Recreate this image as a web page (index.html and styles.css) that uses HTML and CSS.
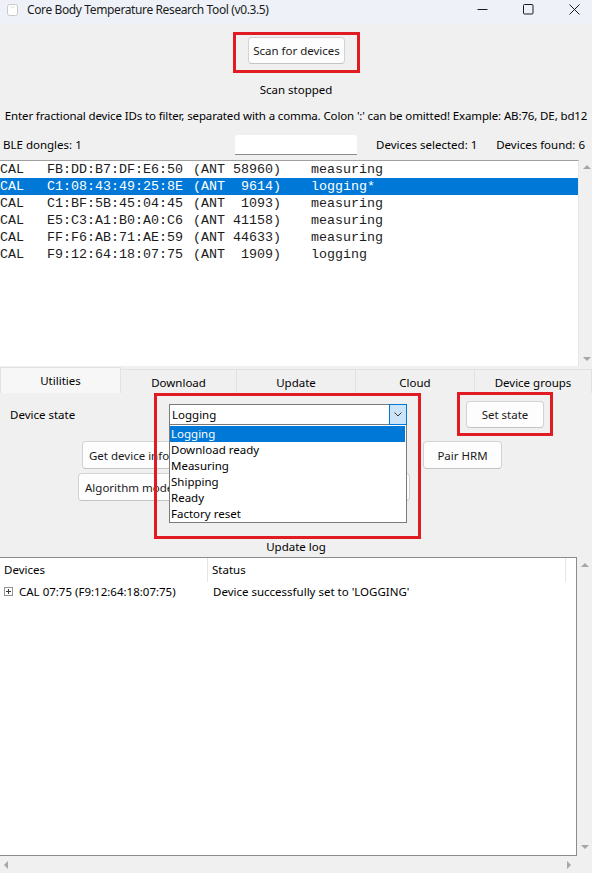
FILE: index.html
```html
<!DOCTYPE html>
<html lang="en">
<head>
<meta charset="utf-8">
<title>Core Body Temperature Research Tool (v0.3.5)</title>
<link rel="stylesheet" href="styles.css">
</head>
<body>
<div class="window">
  <header class="titlebar">
    <svg class="app-icon" width="11" height="12" viewBox="0 0 11 12">
      <rect x="0.5" y="0.5" width="10" height="11" rx="2" fill="#ffffff" stroke="#c8c8c8"/>
      <rect x="3" y="2.5" width="5" height="1" fill="#e4e4e4"/>
    </svg>
    <span class="title">Core Body Temperature Research Tool (v0.3.5)</span>
    <div class="win-controls">
      <span class="wc"><svg width="11" height="11" viewBox="0 0 11 11"><path d="M0.5 5.5h10" stroke="#1b1b1b" stroke-width="1"/></svg></span>
      <span class="wc"><svg width="11" height="11" viewBox="0 0 11 11"><rect x="0.5" y="0.5" width="9.5" height="9.5" rx="1" fill="none" stroke="#1b1b1b" stroke-width="1"/></svg></span>
      <span class="wc"><svg width="11" height="11" viewBox="0 0 11 11"><path d="M0.5 0.5l10 10M10.5 0.5l-10 10" stroke="#1b1b1b" stroke-width="1"/></svg></span>
    </div>
  </header>

  <main class="client">
    <div class="scan-row">
      <div class="mark mark-scan">
        <button class="btn btn-scan">Scan for devices</button>
      </div>
    </div>
    <div class="status-line">Scan stopped</div>
    <div class="hint-line">Enter fractional device IDs to filter, separated with a comma. Colon ':' can be omitted! Example: AB:76, DE, bd12</div>

    <div class="info-row">
      <span class="dongles">BLE dongles: 1</span>
      <input class="filter-input" type="text">
      <span class="selected-count">Devices selected: 1</span>
      <span class="found-count">Devices found: 6</span>
    </div>

    <div class="device-box">
      <ul class="device-list">
        <li class="dev-row"><span class="c-type">CAL</span><span class="c-mac">FB:DD:B7:DF:E6:50</span><span class="c-ant">(ANT 58960)</span><span class="c-state">measuring</span></li>
        <li class="dev-row is-selected"><span class="c-type">CAL</span><span class="c-mac">C1:08:43:49:25:8E</span><span class="c-ant">(ANT  9614)</span><span class="c-state">logging*</span></li>
        <li class="dev-row"><span class="c-type">CAL</span><span class="c-mac">C1:BF:5B:45:04:45</span><span class="c-ant">(ANT  1093)</span><span class="c-state">measuring</span></li>
        <li class="dev-row"><span class="c-type">CAL</span><span class="c-mac">E5:C3:A1:B0:A0:C6</span><span class="c-ant">(ANT 41158)</span><span class="c-state">measuring</span></li>
        <li class="dev-row"><span class="c-type">CAL</span><span class="c-mac">FF:F6:AB:71:AE:59</span><span class="c-ant">(ANT 44633)</span><span class="c-state">measuring</span></li>
        <li class="dev-row"><span class="c-type">CAL</span><span class="c-mac">F9:12:64:18:07:75</span><span class="c-ant">(ANT  1909)</span><span class="c-state">logging</span></li>
      </ul>
      <div class="vscroll list-vscroll">
        <span class="arrow arrow-up"></span>
        <span class="arrow arrow-down"></span>
      </div>
    </div>

    <nav class="tabs">
      <span class="tab tab-utilities is-active">Utilities</span>
      <span class="tab tab-download">Download</span>
      <span class="tab tab-update">Update</span>
      <span class="tab tab-cloud">Cloud</span>
      <span class="tab tab-groups">Device groups</span>
    </nav>

    <section class="tab-panel">
      <div class="panel-row row-state">
        <span class="field-label">Device state</span>
        <div class="combo mark mark-combo">
          <div class="combo-box">
            <span class="combo-value">Logging</span>
            <span class="combo-button">
              <svg width="8" height="5" viewBox="0 0 8 5"><path d="M0.5 0.5l3.5 3.5 3.5-3.5" fill="none" stroke="#3a3a3a" stroke-width="1"/></svg>
            </span>
          </div>
          <ul class="combo-popup">
            <li class="combo-item is-current">Logging</li>
            <li class="combo-item">Download ready</li>
            <li class="combo-item">Measuring</li>
            <li class="combo-item">Shipping</li>
            <li class="combo-item">Ready</li>
            <li class="combo-item">Factory reset</li>
          </ul>
        </div>
        <div class="mark mark-set">
          <button class="btn btn-set">Set state</button>
        </div>
      </div>
      <div class="panel-row row-info">
        <button class="btn btn-left btn-info">Get device info</button>
        <button class="btn btn-pair">Pair HRM</button>
      </div>
      <div class="panel-row row-algo">
        <button class="btn btn-left btn-algo">Algorithm mode</button>
      </div>
    </section>

    <div class="log-title">Update log</div>

    <div class="log-area">
      <div class="log-table">
        <div class="log-head">
          <span class="lh lh-devices">Devices</span>
          <span class="lh lh-status">Status</span>
        </div>
        <div class="log-row">
          <span class="lc lc-devices"><svg class="expander" width="9" height="9" viewBox="0 0 9 9"><rect x="0.5" y="0.5" width="8" height="8" fill="#ffffff" stroke="#919191"/><path d="M2 4.5h5M4.5 2v5" stroke="#3c3c3c"/></svg>CAL 07:75 (F9:12:64:18:07:75)</span>
          <span class="lc lc-status">Device successfully set to 'LOGGING'</span>
        </div>
      </div>
      <div class="vscroll log-vscroll">
        <span class="arrow arrow-up"></span>
        <span class="arrow arrow-down"></span>
      </div>
    </div>
    <div class="hscroll">
      <span class="arrow arrow-left"></span>
      <span class="arrow arrow-right"></span>
    </div>
  </main>
</div>
</body>
</html>
```

FILE: styles.css
```css
* { box-sizing: border-box; }

html, body {
  margin: 0;
  padding: 0;
}

body {
  background: #f0f0f0;
  font-family: "Noto Sans", "Open Sans", sans-serif;
  font-size: 11.5px;
  color: #000000;
}

.window {
  width: 592px;
  height: 873px;
  overflow: hidden;
  display: flex;
  flex-direction: column;
  background: #f0f0f0;
}

/* ---------- title bar ---------- */
.titlebar {
  flex: none;
  height: 24px;
  background: #eef2f8;
  display: flex;
  align-items: flex-start;
}

.app-icon {
  margin: 4px 0 0 7px;
}

.title {
  margin-left: 9px;
  margin-top: 2px;
  font-size: 12px;
  letter-spacing: -0.38px;
  line-height: 16px;
  color: #1b1b1b;
  white-space: nowrap;
}

.win-controls {
  margin-left: auto;
  margin-right: -5px;
  display: flex;
}

.wc {
  width: 46px;
  height: 20px;
  display: flex;
  justify-content: center;
  padding-top: 4px;
}

/* ---------- client area ---------- */
.client {
  flex: 1;
  display: flex;
  flex-direction: column;
}

.btn {
  font: inherit;
  color: #1a1a1a;
  background: #fdfdfd;
  border: 1px solid #d3d3d3;
  border-bottom-color: #c4c4c4;
  border-radius: 4px;
  padding: 0;
  text-align: center;
  white-space: nowrap;
}

.btn-left {
  text-align: left;
  padding-left: 6px;
  overflow: hidden;
}

/* red highlight frames drawn over the controls */
.mark { position: relative; }
.mark::after {
  content: "";
  position: absolute;
  border: 3px solid #e11b22;
  pointer-events: none;
  z-index: 5;
}

.scan-row {
  display: flex;
  justify-content: center;
  padding-top: 13px;
  padding-left: 1px;
}

.btn-scan {
  width: 97px;
  height: 27px;
  display: block;
}

.mark-scan::after { left: -15px; right: -15px; top: -5px; bottom: -9px; }

.status-line {
  margin-top: 17px;
  line-height: 18px;
  height: 18px;
  text-align: center;
}

.hint-line {
  margin-top: 8px;
  line-height: 18px;
  height: 18px;
  text-align: center;
  white-space: nowrap;
  letter-spacing: -0.13px;
}

.info-row {
  margin-top: 10px;
  height: 20px;
  display: flex;
  align-items: center;
  white-space: nowrap;
}

.dongles {
  width: 235px;
  padding-left: 3px;
  margin-top: -1px;
}

.filter-input {
  width: 122px;
  height: 20px;
  border: none;
  border-bottom: 1px solid #8a8a8a;
  border-radius: 3px 3px 0 0;
  background: #ffffff;
  padding: 0;
}

.selected-count { margin-left: 19px; margin-top: -1px; }

.found-count {
  margin-left: auto;
  padding-right: 7px;
  margin-top: -1px;
}

/* ---------- device list ---------- */
.device-box {
  margin-top: 5px;
  height: 206px;
  display: flex;
}

.device-list {
  width: 579px;
  margin: 0;
  padding: 0;
  list-style: none;
  background: #ffffff;
  border-top: 1px solid #a0a0a0;
  border-right: 1px solid #e6e6e6;
  font-family: "Liberation Mono", "Courier New", monospace;
  font-size: 13.33px;
  color: #1c1c1c;
}

.dev-row {
  display: flex;
  height: 17px;
  line-height: 17px;
  white-space: pre;
}

.dev-row.is-selected {
  background: #0078d7;
  color: #ffffff;
}

.c-type { width: 47px; }
.c-mac { width: 146px; }
.c-ant { width: 118px; }

.vscroll {
  flex: 1;
  display: flex;
  flex-direction: column;
  align-items: center;
  justify-content: space-between;
}

.list-vscroll {
  padding: 5px 0 5px 3px;
}

.arrow {
  width: 0;
  height: 0;
  display: block;
}

.arrow-up {
  border-left: 4px solid transparent;
  border-right: 4px solid transparent;
  border-bottom: 4px solid #a6a6a6;
}

.arrow-down {
  border-left: 4px solid transparent;
  border-right: 4px solid transparent;
  border-top: 4px solid #a6a6a6;
}

.arrow-left {
  border-top: 4px solid transparent;
  border-bottom: 4px solid transparent;
  border-right: 4px solid #a6a6a6;
}

.arrow-right {
  border-top: 4px solid transparent;
  border-bottom: 4px solid transparent;
  border-left: 4px solid #a6a6a6;
}

/* ---------- tabs ---------- */
.tabs {
  margin-top: 1px;
  height: 26px;
  display: flex;
  align-items: flex-end;
  white-space: nowrap;
}

.tab {
  height: 24px;
  padding-top: 4px;
  line-height: 18px;
  text-align: center;
  background: #f0f0f0;
  border: 1px solid #e2e2e2;
  border-bottom: none;
  border-left: none;
  color: #000000;
}

.tab.is-active {
  height: 26px;
  background: #f7f7f7;
  border-left: 1px solid #e2e2e2;
}

.tab-utilities { width: 121px; }
.tab-download { width: 116px; }
.tab-update { width: 119px; }
.tab-cloud { width: 119px; }
.tab-groups { width: 117px; }

.tab-panel {
  height: 146px;
  padding-top: 8px;
  background: #f0f0f0;
  position: relative;
}

.panel-row {
  display: flex;
  align-items: center;
}

.row-state { height: 27px; }

.field-label {
  width: 169px;
  padding-left: 10px;
}

.combo {
  width: 238px;
  height: 21px;
}

.combo-box {
  height: 21px;
  display: flex;
  background: #ffffff;
  border: 1px solid #7a7a7a;
}

.combo-value {
  flex: 1;
  padding-left: 2px;
  line-height: 19px;
}

.combo-button {
  width: 18px;
  margin: -1px -1px -1px 0;
  background: #cce4f7;
  border: 1px solid #0078d7;
  display: flex;
  align-items: center;
  justify-content: center;
}

.combo-popup {
  position: absolute;
  left: 0;
  top: 21px;
  width: 238px;
  margin: 0;
  padding: 0;
  list-style: none;
  background: #ffffff;
  border: 1px solid #7a7a7a;
  border-top: none;
  z-index: 4;
}

.combo-item {
  height: 16px;
  line-height: 16px;
  padding-left: 1px;
  margin-right: 1px;
  white-space: nowrap;
}

.combo-item:first-child { margin-top: 1px; }

.combo-item.is-current {
  background: #0078d7;
  color: #ffffff;
}

.mark-combo::after { left: -15px; right: -14px; top: -11px; bottom: -114px; }

.mark-set { margin-left: 59px; }

.btn-set {
  display: block;
  width: 78px;
  height: 27px;
}

.mark-set::after { left: -9px; right: -9px; top: -9px; bottom: -8px; }

.row-info {
  margin-top: 13px;
  height: 28px;
}

.btn-info {
  margin-left: 82px;
  width: 150px;
  height: 28px;
}

.btn-pair {
  margin-left: 191px;
  width: 79px;
  height: 28px;
}

.row-algo {
  margin-top: 4px;
  height: 28px;
}

.btn-algo {
  margin-left: 78px;
  width: 332px;
  height: 28px;
}

/* ---------- update log ---------- */
.log-title {
  height: 18px;
  line-height: 16px;
  text-align: center;
}

.log-area {
  height: 299px;
  display: flex;
}

.log-table {
  width: 577px;
  background: #ffffff;
  border: 1px solid #8c8c8c;
  border-left: none;
}

.log-head {
  height: 24px;
  display: flex;
}

.lh {
  line-height: 23px;
  padding-left: 4px;
  border-right: 1px solid #e5e5e5;
  white-space: nowrap;
}

.lh-devices { width: 208px; padding-left: 4px; }
.lh-status { width: 358px; }

.log-row {
  height: 19px;
  display: flex;
  align-items: center;
  white-space: nowrap;
}

.lc-devices {
  width: 208px;
  padding-left: 4px;
  display: flex;
  align-items: center;
}

.expander { margin-right: 6px; }

.lc-status { padding-left: 5px; }

.log-vscroll {
  padding: 6px 0 7px 1px;
}

.hscroll {
  width: 577px;
  height: 17px;
  display: flex;
  align-items: center;
  justify-content: space-between;
  padding: 0 6px 0 4px;
}
```
